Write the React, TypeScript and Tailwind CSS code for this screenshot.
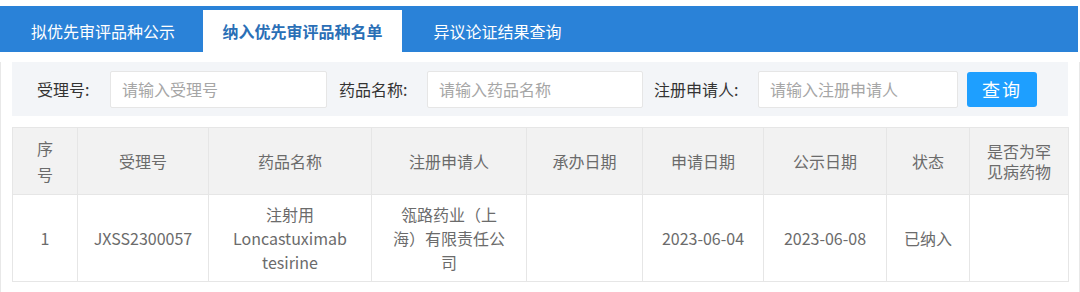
const font = { fontFamily: '"Noto Sans CJK SC", "Noto Sans", sans-serif' };

const tabs = [
  { label: "拟优先审评品种公示", width: "w-[203px]", active: false },
  { label: "纳入优先审评品种名单", width: "w-[199px]", active: true },
  { label: "异议论证结果查询", width: "w-[188px]", active: false },
];

const columns = [
  { title: "序号", width: "w-[65px]" },
  { title: "受理号", width: "w-[131px]" },
  { title: "药品名称", width: "w-[163px]" },
  { title: "注册申请人", width: "w-[155px]" },
  { title: "承办日期", width: "w-[116px]" },
  { title: "申请日期", width: "w-[121px]" },
  { title: "公示日期", width: "w-[123px]" },
  { title: "状态", width: "w-[83px]" },
  { title: "是否为罕见病药物", width: "w-[99px]" },
];

const rows = [
  {
    id: 1,
    acceptNo: "JXSS2300057",
    drug: ["注射用", "Loncastuximab", "tesirine"],
    applicant: ["瓴路药业（上", "海）有限责任公", "司"],
    handleDate: "",
    applyDate: "2023-06-04",
    publicDate: "2023-06-08",
    status: "已纳入",
    rare: "",
  },
];

function SearchField({
  label,
  placeholder,
  labelClass,
  inputClass,
}: {
  label: string;
  placeholder: string;
  labelClass: string;
  inputClass: string;
}) {
  return (
    <>
      <span className={`text-[16px] text-[#333] ${labelClass}`}>{label}</span>
      <input
        className={`h-[37px] rounded-[2px] border border-[#e6e6e6] bg-white px-[11px] text-[16px] text-[#333] outline-none placeholder:text-[#a6a6a6] ${inputClass}`}
        placeholder={placeholder}
        style={font}
      />
    </>
  );
}

export default function App() {
  return (
    <div className="h-[292px] w-[1080px] overflow-hidden bg-white" style={font}>
      <div className="mt-[6px] flex h-[46px] w-[1078px] items-end bg-[#2a82d8]">
        {tabs.map((tab) => (
          <div
            key={tab.label}
            className={`flex h-[42px] items-center justify-center text-[16px] ${tab.width} ${
              tab.active ? "bg-white font-bold text-[#2a6fb6]" : "pl-[3px] text-white"
            }`}
          >
            {tab.label}
          </div>
        ))}
      </div>

      <div className="h-[240px] w-[1080px] border-x border-[#e8e8e8] px-[11px]">
        <div className="mt-[10px] flex h-[54px] w-[1056px] items-center bg-[#f3f5f8]">
          <SearchField label="受理号:" placeholder="请输入受理号" labelClass="ml-[25px] w-[73px]" inputClass="w-[217px]" />
          <SearchField label="药品名称:" placeholder="请输入药品名称" labelClass="ml-[12px] w-[88px]" inputClass="w-[216px]" />
          <SearchField label="注册申请人:" placeholder="请输入注册申请人" labelClass="ml-[11px] w-[104px]" inputClass="w-[200px]" />
          <button className="ml-[9px] h-[35px] w-[70px] rounded-[3px] bg-[#1e9fff] text-[18px] tracking-[2px] text-white">
            查询
          </button>
        </div>

        <table className="mt-[11px] w-[1056px] table-fixed border-collapse text-[16px] text-[#6b6b6b]">
          <thead>
            <tr className="h-[67px] bg-[#f2f2f2]">
              {columns.map((col) =>
                col.title === "序号" ? (
                  <th key={col.title} className={`border border-[#e6e6e6] font-normal leading-[26px] ${col.width}`}>
                    序<br />号
                  </th>
                ) : col.title === "是否为罕见病药物" ? (
                  <th key={col.title} className={`border border-[#e6e6e6] font-normal leading-[20px] ${col.width}`}>
                    是否为罕<br />见病药物
                  </th>
                ) : (
                  <th key={col.title} className={`border border-[#e6e6e6] font-normal ${col.width}`}>
                    {col.title}
                  </th>
                )
              )}
            </tr>
          </thead>
          <tbody>
            {rows.map((row) => (
              <tr key={row.id} className="h-[87px] text-center leading-[24px]">
                <td className="border border-[#e6e6e6]">{row.id}</td>
                <td className="border border-[#e6e6e6]">{row.acceptNo}</td>
                <td className="border border-[#e6e6e6]">
                  {row.drug.map((line) => (
                    <div key={line}>{line}</div>
                  ))}
                </td>
                <td className="border border-[#e6e6e6]">
                  {row.applicant.map((line) => (
                    <div key={line}>{line}</div>
                  ))}
                </td>
                <td className="border border-[#e6e6e6]">{row.handleDate}</td>
                <td className="border border-[#e6e6e6]">{row.applyDate}</td>
                <td className="border border-[#e6e6e6]">{row.publicDate}</td>
                <td className="border border-[#e6e6e6]">{row.status}</td>
                <td className="border border-[#e6e6e6]">{row.rare}</td>
              </tr>
            ))}
          </tbody>
        </table>
      </div>
    </div>
  );
}
